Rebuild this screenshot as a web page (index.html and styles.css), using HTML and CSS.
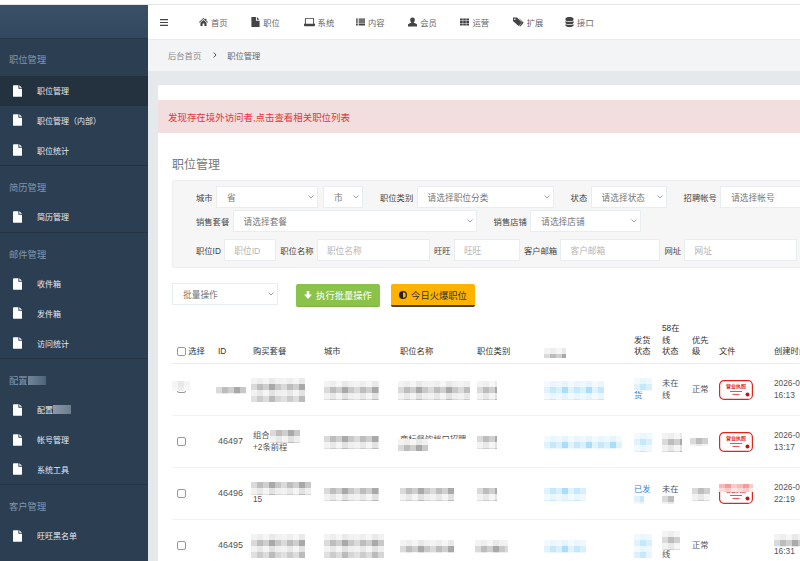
FILE: index.html
```html
<!DOCTYPE html>
<html lang="zh-CN">
<head>
  <meta charset="UTF-8">
  <meta name="viewport" content="width=device-width, initial-scale=1.0">
  <title>职位管理</title>
  <link rel="stylesheet" href="styles.css">
</head>
<body>
  <svg class="defs" width="0" height="0">
    <symbol id="i-file" viewBox="0 0 10 13"><path d="M0 1a1 1 0 0 1 1-1h5v4h4v8a1 1 0 0 1-1 1H1a1 1 0 0 1-1-1zM7 0l3 3H7z"/></symbol>
  </svg>

  <div class="page">
    <aside class="sidebar">
      <div class="sidebar-head"></div>

      <section class="menu">
        <h3>职位管理</h3>
        <a class="menu-item active"><svg><use href="#i-file"/></svg>职位管理</a>
        <a class="menu-item"><svg><use href="#i-file"/></svg>职位管理（内部）</a>
        <a class="menu-item"><svg><use href="#i-file"/></svg>职位统计</a>
      </section>
      <section class="menu">
        <h3>简历管理</h3>
        <a class="menu-item"><svg><use href="#i-file"/></svg>简历管理</a>
      </section>
      <section class="menu">
        <h3>邮件管理</h3>
        <a class="menu-item"><svg><use href="#i-file"/></svg>收件箱</a>
        <a class="menu-item"><svg><use href="#i-file"/></svg>发件箱</a>
        <a class="menu-item"><svg><use href="#i-file"/></svg>访问统计</a>
      </section>
      <section class="menu">
        <h3>配置<i class="side-mask"></i></h3>
        <a class="menu-item"><svg><use href="#i-file"/></svg>配置<i class="side-mask"></i></a>
        <a class="menu-item"><svg><use href="#i-file"/></svg>帐号管理</a>
        <a class="menu-item"><svg><use href="#i-file"/></svg>系统工具</a>
      </section>
      <section class="menu">
        <h3>客户管理</h3>
        <a class="menu-item"><svg><use href="#i-file"/></svg>旺旺黑名单</a>
      </section>
    </aside>

    <main class="main">
      <nav class="topnav">
        <svg class="burger" viewBox="0 0 8 7"><path d="M0 0h8v1.2H0zM0 2.9h8v1.2H0zM0 5.8h8V7H0z"/></svg>
        <a class="nav-link"><svg viewBox="0 0 10 9"><path d="M5 0l2 1.800V.8h1.300V3L10 4.600l-.6.600L5 1.300.6 5.200 0 4.600zM1.600 5.400L5 2.400l3.400 3V9H6V6.300H4V9H1.600z"/></svg>首页</a>
        <a class="nav-link"><svg viewBox="0 0 9 11"><path d="M0 0h5v4h4v7H0zM6 0l3 3H6z"/></svg>职位</a>
        <a class="nav-link"><svg class="wide" viewBox="0 0 12 9"><path d="M2 0h8a1 1 0 0 1 1 1v5.500h1V8a1 1 0 0 1-1 1H1a1 1 0 0 1-1-1V6.500h1V1a1 1 0 0 1 1-1zm0 1v5.500h8V1z"/></svg>系统</a>
        <a class="nav-link"><svg viewBox="0 0 10 8"><path d="M0 0h2v1.600H0zM3 0h7v1.600H3zM0 2.100h2v1.600H0zM3 2.100h7v1.600H3zM0 4.200h2v1.600H0zM3 4.200h7v1.600H3zM0 6.300h2V8H0zM3 6.300h7V8H3z"/></svg>内容</a>
        <a class="nav-link"><svg viewBox="0 0 9 9"><path d="M4.500 0a2.300 2.300 0 0 1 2.300 2.500c0 1-.5 2-1.200 2.400l3 1.600c.3.200.4.400.4.700V9H0V7.200c0-.3.100-.5.400-.7l3-1.600C2.700 4.500 2.200 3.500 2.200 2.500A2.300 2.300 0 0 1 4.500 0z"/></svg>会员</a>
        <a class="nav-link"><svg viewBox="0 0 10 8"><path d="M0 0h3v2.300H0zM3.500 0h3v2.300h-3zM7 0h3v2.300H7zM0 2.850h3v2.300H0zM3.500 2.850h3v2.300h-3zM7 2.850h3v2.300H7zM0 5.700h3V8H0zM3.500 5.700h3V8h-3zM7 5.700h3V8H7z"/></svg>运营</a>
        <a class="nav-link"><svg class="wide" viewBox="0 0 11 9"><path d="M0 0h4l5 5-3.500 3.500L0 3.500zm1.800 1a.8.800 0 1 0 0 1.600.8.800 0 0 0 0-1.600zM5.500 0l5.200 5.200L7.200 9l-1-.6L9.200 5z"/></svg>扩展</a>
        <a class="nav-link"><svg viewBox="0 0 8 10"><path d="M0 1.500C0 .600 1.800 0 4 0s4 .600 4 1.500V3c0 .800-1.800 1.300-4 1.300S0 3.800 0 3zM0 4.100c.8.600 2.300 1 4 1s3.200-.400 4-1v1.900c0 .800-1.800 1.300-4 1.300S0 6.800 0 6zM0 7.100c.8.600 2.300 1 4 1s3.200-.400 4-1v1.400C8 9.400 6.200 10 4 10S0 9.400 0 8.500z"/></svg>接口</a>
      </nav>

      <div class="crumbs">
        <span>后台首页</span>
        <svg class="crumb-sep" viewBox="0 0 4 6"><path d="M.7.500L3 3 .7 5.500" fill="none" stroke="#555" stroke-width="1"/></svg>
        <span class="crumb-current">职位管理</span>
      </div>

      <div class="content">
        <div class="card">
          <div class="alert">发现存在境外访问者,点击查看相关职位列表</div>
          <h2 class="title">职位管理</h2>

          <form class="filter">
            <div class="filter-row">
              <label class="field">城市
                <select class="w-102"><option>省</option></select>
                <select class="w-40"><option>市</option></select>
              </label>
              <label class="field">职位类别 <select class="w-137"><option>请选择职位分类</option></select></label>
              <label class="field">状态 <select class="w-76"><option>请选择状态</option></select></label>
              <label class="field">招聘帐号 <select class="w-140"><option>请选择帐号</option></select></label>
            </div>
            <div class="filter-row">
              <label class="field">销售套餐 <select class="w-244"><option>请选择套餐</option></select></label>
              <label class="field">销售店铺 <select class="w-111"><option>请选择店铺</option></select></label>
            </div>
            <div class="filter-row filter-inputs">
              <label class="field">职位ID <input class="w-52" placeholder="职位ID"></label>
              <label class="field">职位名称 <input class="w-113" placeholder="职位名称"></label>
              <label class="field">旺旺 <input class="w-66" placeholder="旺旺"></label>
              <label class="field">客户邮箱 <input class="w-100" placeholder="客户邮箱"></label>
              <label class="field">网址 <input class="w-113" placeholder="网址"></label>
            </div>
          </form>

          <div class="batch">
            <select class="w-106"><option>批量操作</option></select>
            <button type="button" class="btn btn-green">
              <svg viewBox="0 0 8 8"><path d="M2.700 0h2.600v3.500H8L4 8 0 3.500h2.700z"/></svg>执行批量操作
            </button>
            <button type="button" class="btn btn-orange">
              <svg viewBox="0 0 8 8"><path d="M4 0a4 4 0 1 1 0 8 4 4 0 0 1 0-8zm0 1.200v5.600a2.800 2.800 0 0 0 0-5.600z" fill-rule="evenodd"/></svg>今日火爆职位
            </button>
          </div>

          <table class="jobs">
            <colgroup>
              <col class="c-41"><col class="c-35"><col class="c-71"><col class="c-76"><col class="c-77"><col class="c-67">
              <col class="c-90"><col class="c-28"><col class="c-30"><col class="c-27"><col class="c-55"><col class="c-60">
            </colgroup>
            <thead>
              <tr>
                <th><input type="checkbox" class="check"> 选择</th>
                <th>ID</th>
                <th>购买套餐</th>
                <th>城市</th>
                <th>职位名称</th>
                <th>职位类别</th>
                <th><i class="mosaic gray m-22-10"></i></th>
                <th>发货<br>状态</th>
                <th>58在<br>线<br>状态</th>
                <th>优先<br>级</th>
                <th>文件</th>
                <th class="nowrap">创建时间</th>
              </tr>
            </thead>
            <tbody>
              <tr>
                <td><i class="mosaic light m-18-10 check-mask"></i><input type="checkbox" class="check check-cut"></td>
                <td><i class="mosaic gray flip m-30-6 pull"></i></td>
                <td><i class="mosaic gray m-54-24 pull"></i></td>
                <td><i class="mosaic gray m-55-18"></i></td>
                <td><i class="mosaic gray m-72-18 pull"></i></td>
                <td><i class="mosaic gray m-20-18"></i></td>
                <td><i class="mosaic blue m-60-18"></i></td>
                <td class="link"><i class="mosaic blue m-18-12"></i>货</td>
                <td>未在<br>线</td>
                <td>正常</td>
                <td>
                  <svg class="license" viewBox="0 0 34 20">
                    <rect x=".6" y=".6" width="32.8" height="18.8" rx="4.5" fill="#fff" stroke="#e2231a" stroke-width="1.2"/>
                    <text x="17" y="8" text-anchor="middle" class="license-text">营业执照</text>
                    <path d="M11 11.500h12M13.500 14.500h7" stroke="#e2231a" stroke-width=".8"/>
                    <circle cx="28.500" cy="14.500" r="2" fill="#d0100c"/>
                  </svg>
                </td>
                <td class="nowrap">2026-06-18<br>16:13</td>
              </tr>
              <tr>
                <td><input type="checkbox" class="check"></td>
                <td class="num">46497</td>
                <td><span class="half">组合<i class="mosaic gray flip m-30-12"></i></span><br>+2条前程</td>
                <td><i class="mosaic gray flip m-55-12"></i></td>
                <td><span class="cut-line">商标餐饮档口招聘</span><i class="mosaic gray m-30-12 pull"></i></td>
                <td><i class="mosaic gray flip m-20-12"></i></td>
                <td><i class="mosaic blue m-78-12"></i></td>
                <td><i class="mosaic blue m-18-18"></i></td>
                <td><i class="mosaic gray m-20-18"></i></td>
                <td><i class="mosaic gray flip m-18-8"></i></td>
                <td>
                  <svg class="license" viewBox="0 0 34 20">
                    <rect x=".6" y=".6" width="32.8" height="18.8" rx="4.5" fill="#fff" stroke="#e2231a" stroke-width="1.2"/>
                    <text x="17" y="8" text-anchor="middle" class="license-text">营业执照</text>
                    <path d="M11 11.500h12M13.500 14.500h7" stroke="#e2231a" stroke-width=".8"/>
                    <circle cx="28.500" cy="14.500" r="2" fill="#d0100c"/>
                  </svg>
                </td>
                <td class="nowrap">2026-06-18<br>13:17</td>
              </tr>
              <tr>
                <td><input type="checkbox" class="check"></td>
                <td class="num">46496</td>
                <td><i class="mosaic gray flip m-60-12 pull"></i>15</td>
                <td><i class="mosaic gray flip m-55-12"></i></td>
                <td><i class="mosaic gray flip m-54-12"></i></td>
                <td><i class="mosaic gray flip m-20-12"></i></td>
                <td><i class="mosaic blue flip m-42-12"></i></td>
                <td class="link">已发<i class="mosaic blue flip m-10-8"></i></td>
                <td>未在<i class="mosaic gray flip m-12-8"></i></td>
                <td><i class="mosaic gray flip m-18-12"></i></td>
                <td>
                  <span class="license-wrap">
                    <svg class="license" viewBox="0 0 34 20">
                      <rect x=".6" y=".6" width="32.8" height="18.8" rx="4.5" fill="#fff" stroke="#e2231a" stroke-width="1.2"/>
                      <text x="17" y="8" text-anchor="middle" class="license-text">营业执照</text>
                      <path d="M11 11.500h12M13.500 14.500h7" stroke="#e2231a" stroke-width=".8"/>
                      <circle cx="28.500" cy="14.500" r="2" fill="#d0100c"/>
                    </svg>
                    <i class="mosaic red license-mask"></i>
                  </span>
                </td>
                <td class="nowrap">2026-06-17<br>22:19</td>
              </tr>
              <tr>
                <td><input type="checkbox" class="check"></td>
                <td class="num">46495</td>
                <td><i class="mosaic gray m-54-24 pull"></i></td>
                <td><i class="mosaic gray m-60-24"></i></td>
                <td><i class="mosaic gray m-54-12"></i></td>
                <td><i class="mosaic gray m-33-12 pull"></i></td>
                <td><i class="mosaic blue m-42-12"></i></td>
                <td><i class="mosaic blue m-18-24"></i></td>
                <td><i class="mosaic gray m-18-18"></i>线</td>
                <td>正常</td>
                <td></td>
                <td class="nowrap"><i class="mosaic gray m-30-12"></i>16:31</td>
              </tr>
            </tbody>
          </table>
        </div>
      </div>
    </main>
  </div>
</body>
</html>
```

FILE: styles.css
```css
* {
  margin: 0;
  padding: 0;
  box-sizing: border-box;
}

body {
  font-family: "Liberation Sans", "Noto Sans CJK SC", sans-serif;
  font-size: 8.3px;
  color: #444;
  background-color: #fff;
  overflow: hidden;
}

.defs {
  position: absolute;
}

.license-text {
  font-size: 5px;
  font-weight: 700;
  fill: #e2231a;
}

.page {
  display: grid;
  grid-template-columns: 148px 1fr;
  height: 561px;
  margin-top: 4px;
  border-top: 1px solid #e3e6e8;
  overflow: hidden;
}

/* sidebar */
.sidebar {
  background-color: #2c3e52;
}

.sidebar-head {
  height: 34px;
  background: linear-gradient(#3a5068, #32485e);
  border-bottom: 1px solid #25384a;
}

.menu {
  border-bottom: 1px solid #243444;
}

.menu:last-child {
  border-bottom: none;
}

.menu h3 {
  display: flex;
  align-items: center;
  height: 36.2px;
  padding: 14px 0 6px 9px;
  font-size: 9.3px;
  font-weight: 400;
  line-height: 16px;
  color: #7f98b0;
}

.menu:first-of-type h3 {
  height: 37px;
  padding: 13px 0 8px 9px;
}

.menu-item {
  display: flex;
  align-items: center;
  height: 29.65px;
  padding-left: 13px;
  font-size: 8px;
  color: #e6eaee;
}

.menu-item svg {
  width: 9px;
  height: 12px;
  margin-right: 15px;
  fill: #fff;
}

.menu-item.active {
  background-color: #243240;
}

.side-mask {
  display: block;
  width: 18px;
  height: 9px;
  background: linear-gradient(90deg, #71869b, #4e6378);
}

.menu-item .side-mask {
  background: linear-gradient(90deg, #8b99a8, #6b7d90);
}

/* top bar */
.main {
  display: flex;
  flex-direction: column;
  min-width: 0;
  background-color: #e6e9eb;
  overflow: hidden;
}

.topnav {
  display: flex;
  align-items: center;
  height: 34px;
  padding: 1px 0 0 12px;
  background-color: #fff;
  color: #666;
}

.burger {
  width: 8px;
  height: 7px;
  margin-right: 31px;
  fill: #444;
}

.nav-link {
  display: flex;
  align-items: center;
  width: 52.3px;
  font-size: 8.3px;
}

.nav-link svg {
  width: 9px;
  height: 10px;
  margin-right: 3px;
  fill: #444;
}

.nav-link svg.wide {
  width: 11px;
}

.crumbs {
  display: flex;
  align-items: center;
  height: 33px;
  padding-left: 20px;
  background-color: #f3f4f6;
  border-top: 1px solid #e9eaec;
  color: #888;
}

.crumb-sep {
  width: 4px;
  height: 6px;
  margin: 0 10px 0 12px;
}

.crumb-current {
  color: #666;
}

/* content */
.content {
  padding: 14px 0 0 10px;
}

.card {
  height: 480px;
  padding-top: 15px;
  background-color: #fff;
  border-radius: 2px 0 0 0;
  overflow: hidden;
}

.alert {
  height: 33px;
  padding: 1px 0 0 10px;
  background-color: #f2dede;
  font-size: 9.45px;
  line-height: 33px;
  color: #e4353a;
}

.title {
  margin: 25px 0 8px 14px;
  font-size: 12px;
  font-weight: 400;
  line-height: 14px;
  color: #777;
}

.filter {
  width: 700px;
  margin-left: 14px;
  padding: 5px 0 6px 23px;
  background-color: #f6f6f6;
  border: 1px solid #eceeef;
  border-right: none;
  border-radius: 2px 0 0 2px;
}

.filter-row {
  display: flex;
  gap: 17px;
  margin-bottom: 2px;
}

.filter-inputs {
  gap: 4px;
  margin: 7px 0 0;
}

.field {
  display: flex;
  align-items: center;
  gap: 3.4px;
  white-space: nowrap;
  color: #444;
}

select,
input:not([type]) {
  height: 22px;
  padding: 2px 0 0 10px;
  background-color: #fff;
  border: 1px solid #e8edf0;
  font-family: inherit;
  font-size: 8.7px;
  color: #777;
}

input:not([type]) {
  padding-left: 9px;
}

input::placeholder {
  color: #b5b5b5;
  opacity: 1;
}

select {
  appearance: none;
  background-image: url("data:image/svg+xml,%3Csvg xmlns='http://www.w3.org/2000/svg' width='6' height='4'%3E%3Cpath d='M.5.500L3 3 5.500.500' fill='none' stroke='%23888' stroke-width='.8'/%3E%3C/svg%3E");
  background-repeat: no-repeat;
  background-position: right 3px center;
}

.w-40 { width: 40px; margin-left: 1.6px; }
.w-52 { width: 52px; }
.w-66 { width: 66px; }
.w-76 { width: 76px; }
.w-100 { width: 100px; }
.w-102 { width: 102px; }
.w-106 { width: 106px; }
.w-111 { width: 111px; }
.w-113 { width: 113px; }
.w-137 { width: 137px; }
.w-140 { width: 140px; }
.w-244 { width: 244px; }

.batch {
  display: flex;
  align-items: flex-start;
  gap: 11px;
  margin: 15px 0 0 14px;
}

.batch select {
  margin-right: 7px;
}

.btn {
  display: flex;
  align-items: center;
  justify-content: center;
  gap: 4px;
  width: 84px;
  height: 23px;
  margin-top: 1px;
  border: none;
  border-radius: 2px;
  font-family: inherit;
  font-size: 9.3px;
}

.btn svg {
  width: 8px;
  height: 8px;
}

.btn-green {
  background-color: #8bc34a;
  border-bottom: 1px solid #7fb13f;
  color: #fff;
  fill: #fff;
}

.btn-orange {
  background-color: #ffb300;
  border-bottom: 2px solid #4a4236;
  color: #333;
  fill: #222;
}

/* table */
.jobs {
  width: 657px;
  margin: 16px 0 0 14px;
  border-collapse: collapse;
  table-layout: fixed;
  line-height: 11.7px;
  color: #444;
}

.c-27 { width: 27px; }
.c-28 { width: 28px; }
.c-30 { width: 30px; }
.c-35 { width: 35px; }
.c-41 { width: 41px; }
.c-55 { width: 55px; }
.c-60 { width: 60px; }
.c-67 { width: 67px; }
.c-71 { width: 71px; }
.c-76 { width: 76px; }
.c-77 { width: 77px; }
.c-90 { width: 90px; }

.jobs th {
  padding: 0 3px 5px 5px;
  border-bottom: 1px solid #e4ecec;
  font-weight: 400;
  text-align: left;
  vertical-align: bottom;
  color: #333;
}

.jobs td {
  height: 52px;
  padding: 1px 3px 0 5px;
  border-bottom: 1px solid #f1f3f4;
  vertical-align: middle;
  color: #555;
}

.jobs td.num {
  font-size: 9px;
}

.jobs td.link {
  color: #3b7dd8;
}

.nowrap {
  white-space: nowrap;
}

.check {
  appearance: none;
  display: inline-block;
  width: 9px;
  height: 9px;
  vertical-align: -2px;
  background-color: #fff;
  border: 1px solid #999;
  border-radius: 2px;
}

/* first row: the box is half hidden under its patch */
.check-cut {
  display: block;
  margin: -7px 0 6px;
}

.check-mask {
  position: relative;
  z-index: 1;
  margin-left: -5px;
}

.half {
  display: inline-flex;
  align-items: center;
  height: 12px;
}

.cut-line {
  display: block;
  height: 5px;
  overflow: hidden;
  white-space: nowrap;
}

/* pixelated privacy patches */
.mosaic {
  display: block;
  background-repeat: no-repeat;
  background-size: 100% 6px;
  background-position: 0 0, 0 6px, 0 12px, 0 18px;
}

.mosaic.flip {
  background-position: 0 -6px, 0 0, 0 6px, 0 12px;
}

.gray {
  background-image:
    repeating-linear-gradient(90deg, #f3f3f3 0 6px, #eee 6px 12px, #f6f6f6 12px 18px, #e9e9e9 18px 24px, #f1f1f1 24px 30px),
    repeating-linear-gradient(90deg, #dadada 0 6px, #bdbdbd 6px 12px, #cfcfcf 12px 18px, #a9a9a9 18px 24px, #c8c8c8 24px 30px),
    repeating-linear-gradient(90deg, #f2f2f2 0 6px, #e8e8e8 6px 12px, #f5f5f5 12px 18px, #e2e2e2 18px 24px, #efefef 24px 30px),
    repeating-linear-gradient(90deg, #e0e0e0 0 6px, #ccc 6px 12px, #ddd 12px 18px, #bbb 18px 24px, #d6d6d6 24px 30px);
}

.light {
  background-image:
    repeating-linear-gradient(90deg, #f4f4f4 0 6px, #e8e8e8 6px 12px, #f4f4f4 12px 18px),
    repeating-linear-gradient(90deg, #f8f8f8 0 6px, #eee 6px 12px, #f8f8f8 12px 18px);
}

.blue {
  background-image:
    repeating-linear-gradient(90deg, #f3fafe 0 6px, #e9f6fd 6px 12px, #eef8fe 12px 18px, #e5f4fd 18px 24px),
    repeating-linear-gradient(90deg, #e0f3fd 0 6px, #c5e9fb 6px 12px, #d8f0fc 12px 18px, #a9defa 18px 24px),
    repeating-linear-gradient(90deg, #f3fafe 0 6px, #e9f6fd 6px 12px, #eef8fe 12px 18px, #e5f4fd 18px 24px),
    repeating-linear-gradient(90deg, #dbeffc 0 6px, #c5e9fb 6px 12px, #e5f4fd 12px 18px, #d8f0fc 18px 24px);
}

.red {
  background-image:
    repeating-linear-gradient(90deg, #f7b9b9 0 6px, #f49c9c 6px 12px, #f9cccc 12px 18px),
    repeating-linear-gradient(90deg, #fbd9d9 0 6px, #f9c8c8 6px 12px, #fde6e6 12px 18px);
}

.pull { margin-left: -2px; }

.m-10-8 { width: 10px; height: 8px; }
.m-12-8 { width: 12px; height: 8px; }
.m-18-8 { width: 18px; height: 8px; margin-left: -2px; }
.m-18-10 { width: 18px; height: 10px; }
.m-18-12 { width: 18px; height: 12px; }
.m-18-18 { width: 18px; height: 18px; }
.m-18-24 { width: 18px; height: 24px; }
.m-20-12 { width: 20px; height: 12px; }
.m-20-18 { width: 20px; height: 18px; }
.m-22-10 { width: 22px; height: 10px; }
.m-30-6 { width: 30px; height: 6px; }
.m-30-12 { width: 30px; height: 12px; }
.m-33-12 { width: 33px; height: 12px; }
.m-42-12 { width: 42px; height: 12px; }
.m-54-12 { width: 54px; height: 12px; }
.m-54-24 { width: 54px; height: 24px; }
.m-55-12 { width: 55px; height: 12px; }
.m-55-18 { width: 55px; height: 18px; }
.m-60-12 { width: 60px; height: 12px; }
.m-60-18 { width: 60px; height: 18px; }
.m-60-24 { width: 60px; height: 24px; }
.m-72-18 { width: 72px; height: 18px; }
.m-78-12 { width: 78px; height: 12px; }

/* licence stamp */
.license {
  display: block;
  width: 34px;
  height: 20px;
}

.license-wrap {
  display: block;
  position: relative;
  width: 34px;
}

.license-mask {
  position: absolute;
  top: 0;
  left: 0;
  width: 34px;
  height: 8px;
  background-size: 100% 4px;
  background-position: 0 0, 0 4px;
}
```
